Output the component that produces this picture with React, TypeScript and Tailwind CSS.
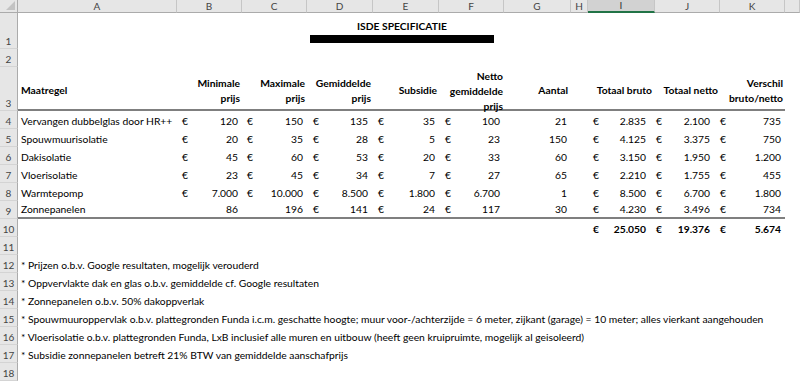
const font = { fontFamily: "Lato, 'Liberation Sans', sans-serif" };

const letters = ["A", "B", "C", "D", "E", "F", "G", "H", "I", "J", "K", ""];

type Row = {
  name: string;
  b: string;
  c: string;
  d: string;
  e: string;
  f: string;
  g: string;
  i: string;
  j: string;
  k: string;
  noEuroBC?: boolean;
};

const rows: Row[] = [
  { name: "Vervangen dubbelglas door HR++", b: "120", c: "150", d: "135", e: "35", f: "100", g: "21", i: "2.835", j: "2.100", k: "735" },
  { name: "Spouwmuurisolatie", b: "20", c: "35", d: "28", e: "5", f: "23", g: "150", i: "4.125", j: "3.375", k: "750" },
  { name: "Dakisolatie", b: "45", c: "60", d: "53", e: "20", f: "33", g: "60", i: "3.150", j: "1.950", k: "1.200" },
  { name: "Vloerisolatie", b: "23", c: "45", d: "34", e: "7", f: "27", g: "65", i: "2.210", j: "1.755", k: "455" },
  { name: "Warmtepomp", b: "7.000", c: "10.000", d: "8.500", e: "1.800", f: "6.700", g: "1", i: "8.500", j: "6.700", k: "1.800" },
  { name: "Zonnepanelen", b: "86", c: "196", d: "141", e: "24", f: "117", g: "30", i: "4.230", j: "3.496", k: "734", noEuroBC: true },
];

const notes = [
  "* Prijzen o.b.v. Google resultaten, mogelijk verouderd",
  "* Oppvervlakte dak en glas o.b.v. gemiddelde cf. Google resultaten",
  "* Zonnepanelen o.b.v. 50% dakoppverlak",
  "* Spouwmuuroppervlak o.b.v. plattegronden Funda i.c.m. geschatte hoogte; muur voor-/achterzijde = 6 meter, zijkant (garage) = 10 meter; alles vierkant aangehouden",
  "* Vloerisolatie o.b.v. plattegronden Funda, LxB inclusief alle muren en uitbouw (heeft geen kruipruimte, mogelijk al geisoleerd)",
  "* Subsidie zonnepanelen betreft 21% BTW van gemiddelde aanschafprijs",
];

function RowHead({ n }: { n: number }) {
  return (
    <div className="flex items-end justify-center border-b border-r border-b-[#d4d4d4] border-r-[#ababab] bg-[#e6e6e6] pb-[1px] text-[10px] leading-[12px] text-[#444]">
      {n}
    </div>
  );
}

function Money({ v, euro = true, pl, pr, bold, line }: { v: string; euro?: boolean; pl: string; pr: string; bold?: boolean; line?: boolean }) {
  return (
    <div className={`flex items-end justify-between leading-[15px] ${pl} ${pr} ${bold ? "font-bold" : ""} ${line ? "border-b-2 border-[#7f7f7f]" : ""}`}>
      <span>{euro ? "€" : ""}</span>
      <span>{v}</span>
    </div>
  );
}

function Head({ children, pr = "pr-[2px]", align = "items-center pt-[5px]" }: { children: React.ReactNode; pr?: string; align?: string }) {
  return (
    <div className={`flex justify-end border-b-2 border-[#7f7f7f] text-right font-bold leading-[15px] ${align} ${pr}`}>
      <div>{children}</div>
    </div>
  );
}

export default function App() {
  return (
    <div className="h-[382px] w-[800px] overflow-hidden bg-white text-[10.3px] text-black" style={font}>
      <div className="grid grid-cols-[18px_159px_65px_65px_66px_66px_65px_67px_17px_67px_65px_65px_15px] grid-rows-[13px_36px_18px_44px_repeat(15,18px)]">
        {/* column headers */}
        <div className="relative border-b border-r border-[#ababab] bg-[#e6e6e6]">
          <svg className="absolute bottom-[2px] right-[2px]" width="9" height="9" viewBox="0 0 9 9">
            <polygon points="9,0 9,9 0,9" fill="#c3c3c3" />
          </svg>
        </div>
        {letters.map((l, i) =>
          l === "I" ? (
            <div key={i} className="flex items-center justify-center border-b-2 border-r border-b-[#217346] border-r-[#c6c6c6] bg-[#d2d2d2] text-[10px] text-[#333]">
              {l}
            </div>
          ) : (
            <div key={i} className="flex items-center justify-center border-b border-r border-b-[#ababab] border-r-[#c6c6c6] bg-[#e6e6e6] text-[10px] text-[#444]">
              {l}
            </div>
          )
        )}

        {/* row 1 */}
        <RowHead n={1} />
        <div className="col-span-3" />
        <div className="col-span-3 flex flex-col items-center pr-[7px] pt-[7px]">
          <div className="font-bold leading-[13px]">ISDE SPECIFICATIE</div>
          <div className="mt-[2px] h-[8px] w-[184px] bg-black" />
        </div>
        <div className="col-span-6" />

        {/* row 2 */}
        <RowHead n={2} />
        <div className="col-span-12" />

        {/* row 3 */}
        <RowHead n={3} />
        <div className="flex items-center border-b-2 border-[#7f7f7f] pl-[3px] pt-[5px] font-bold">Maatregel</div>
        <Head>Minimale<br />prijs</Head>
        <Head>Maximale<br />prijs</Head>
        <Head>Gemiddelde<br />prijs</Head>
        <Head>Subsidie</Head>
        <Head pr="pr-[1px]" align="items-start pt-[2px]">Netto<br />gemiddelde<br />prijs</Head>
        <Head pr="pr-[3px]">Aantal</Head>
        <div className="border-b-2 border-[#7f7f7f]" />
        <Head pr="pr-[3px]">Totaal bruto</Head>
        <Head>Totaal netto</Head>
        <Head>Verschil<br />bruto/netto</Head>
        <div />

        {/* rows 4-9 */}
        {rows.map((r, idx) => {
          const last = idx === rows.length - 1;
          const bl = last ? "border-b-2 border-[#7f7f7f]" : "";
          return [
            <RowHead key={`h${idx}`} n={idx + 4} />,
            <div key={`a${idx}`} className={`flex items-end whitespace-nowrap pl-[3px] leading-[15px] ${bl}`}>{r.name}</div>,
            <Money key={`b${idx}`} v={r.b} euro={!r.noEuroBC} pl="pl-[5px]" pr="pr-[4px]" line={last} />,
            <Money key={`c${idx}`} v={r.c} euro={!r.noEuroBC} pl="pl-[5px]" pr="pr-[4px]" line={last} />,
            <Money key={`d${idx}`} v={r.d} pl="pl-[6px]" pr="pr-[5px]" line={last} />,
            <Money key={`e${idx}`} v={r.e} pl="pl-[5px]" pr="pr-[4px]" line={last} />,
            <Money key={`f${idx}`} v={r.f} pl="pl-[6px]" pr="pr-[4px]" line={last} />,
            <div key={`g${idx}`} className={`flex items-end justify-end pr-[4px] leading-[15px] ${bl}`}>{r.g}</div>,
            <div key={`hh${idx}`} className={bl} />,
            <Money key={`i${idx}`} v={r.i} pl="pl-[5px]" pr="pr-[9px]" line={last} />,
            <Money key={`j${idx}`} v={r.j} pl="pl-[1px]" pr="pr-[10px]" line={last} />,
            <Money key={`k${idx}`} v={r.k} pl="pl-0" pr="pr-[4px]" line={last} />,
            <div key={`l${idx}`} />,
          ];
        })}

        {/* row 10 totals */}
        <RowHead n={10} />
        <div className="col-span-8" />
        <Money v="25.050" pl="pl-[5px]" pr="pr-[9px]" bold />
        <Money v="19.376" pl="pl-[1px]" pr="pr-[10px]" bold />
        <Money v="5.674" pl="pl-0" pr="pr-[4px]" bold />
        <div />

        {/* row 11 */}
        <RowHead n={11} />
        <div className="col-span-12" />

        {/* notes */}
        {notes.map((n, i) => [
          <RowHead key={`nh${i}`} n={12 + i} />,
          <div key={`n${i}`} className="col-span-12 flex items-end whitespace-nowrap pl-[3px] leading-[15px]">{n}</div>,
        ])}

        <RowHead n={18} />
        <div className="col-span-12" />
      </div>
    </div>
  );
}
